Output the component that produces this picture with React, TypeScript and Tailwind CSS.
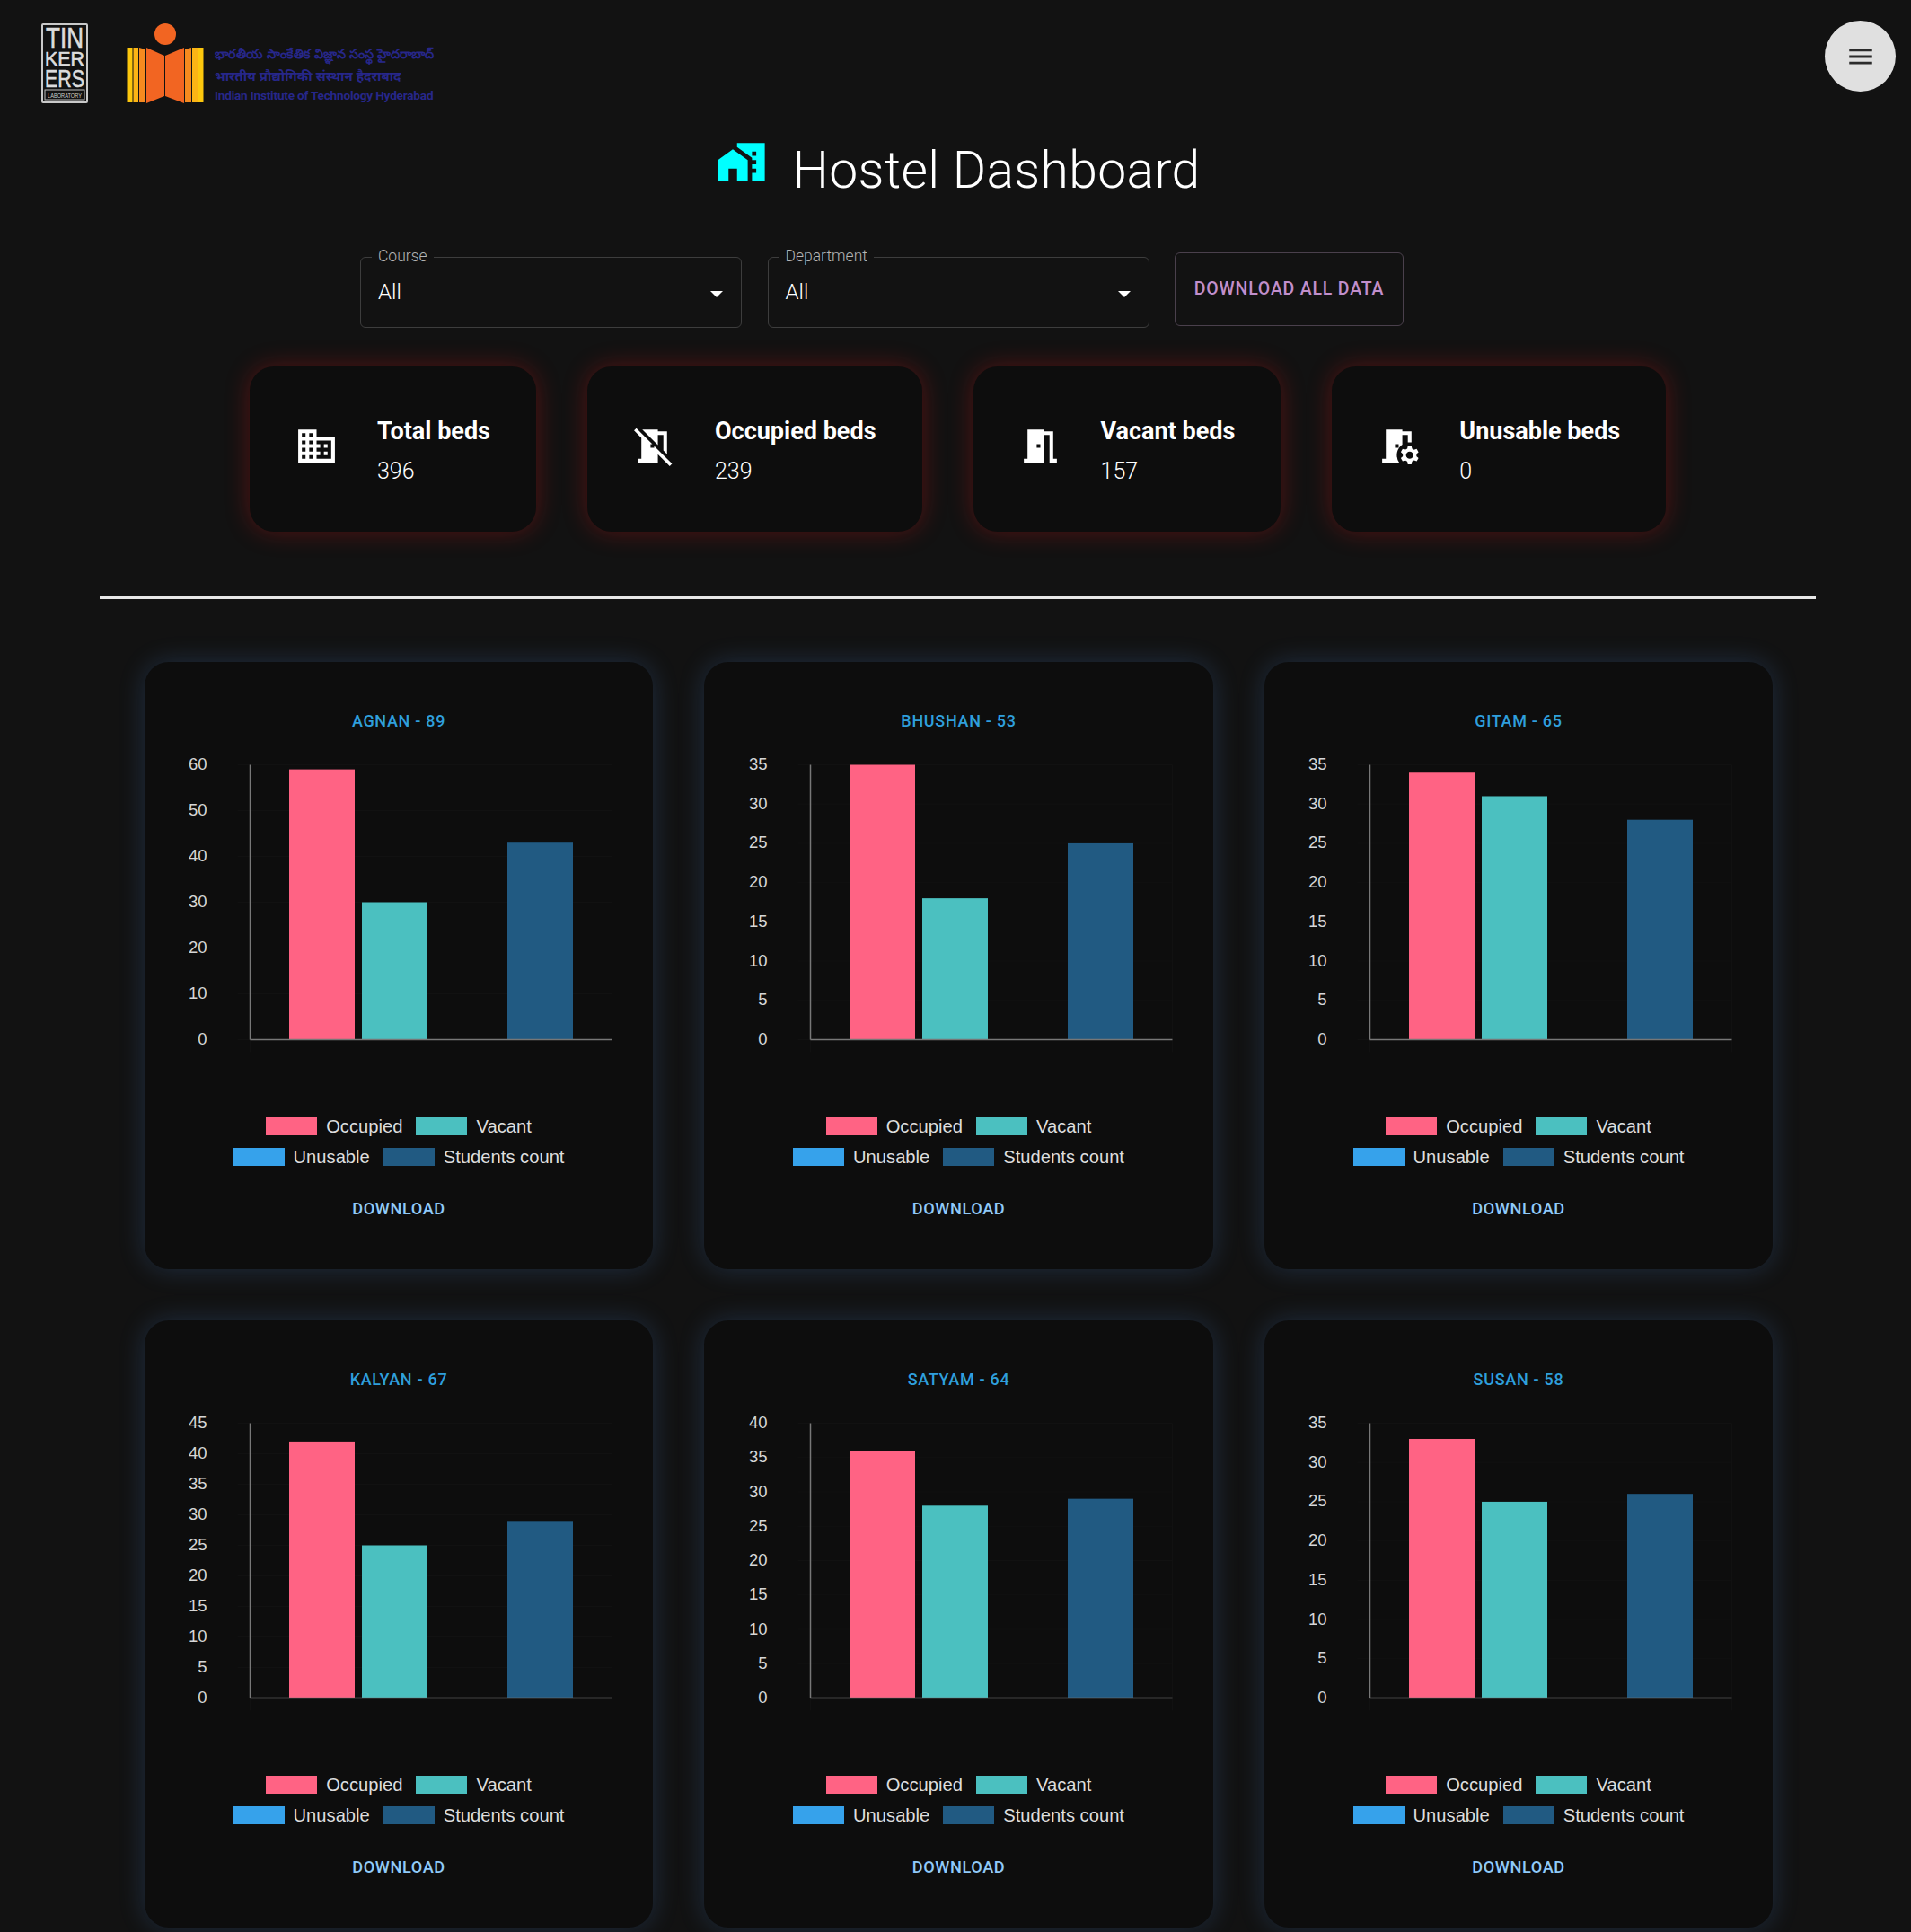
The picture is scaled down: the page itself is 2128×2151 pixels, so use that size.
import { MdDomain, MdMapsHomeWork, MdMeetingRoom, MdMenu, MdNoMeetingRoom, MdRoomPreferences } from "react-icons/md";

const stats = [
  { title: "Total beds", value: 396, icon: MdDomain },
  { title: "Occupied beds", value: 239, icon: MdNoMeetingRoom },
  { title: "Vacant beds", value: 157, icon: MdMeetingRoom },
  { title: "Unusable beds", value: 0, icon: MdRoomPreferences },
];

const hostels = [
  { name: "AGNAN - 89", data: [59, 30, 0, 43], max: 60, step: 10 },
  { name: "BHUSHAN - 53", data: [35, 18, 0, 25], max: 35, step: 5 },
  { name: "GITAM - 65", data: [34, 31, 0, 28], max: 35, step: 5 },
  { name: "KALYAN - 67", data: [42, 25, 0, 29], max: 45, step: 5 },
  { name: "SATYAM - 64", data: [36, 28, 0, 29], max: 40, step: 5 },
  { name: "SUSAN - 58", data: [33, 25, 0, 26], max: 35, step: 5 },
];

const barColors = ["#ff6384", "#4bc0c0", "#36a2eb", "#215a82"];

const TinkerersLogo = () => (
  <svg width="52" height="89" viewBox="0 0 52 89" className="shrink-0 overflow-visible">
    <rect x="1" y="1" width="50" height="87" fill="none" stroke="#c9c9c9" strokeWidth="2" rx="1" />
    <g fill="#dcdcdc" stroke="#dcdcdc" strokeWidth="0.6" className="[font-family:'Liberation_Sans',sans-serif]">
      <text x="5" y="27" fontSize="32" textLength="42" lengthAdjust="spacingAndGlyphs">TIN</text>
      <text x="4" y="47" fontSize="22" textLength="44" lengthAdjust="spacingAndGlyphs">KER</text>
      <text x="4" y="70.5" fontSize="28" textLength="44" lengthAdjust="spacingAndGlyphs">ERS</text>
    </g>
    <rect x="4" y="74" width="44" height="11" fill="none" stroke="#bdbdbd" strokeWidth="1" />
    <text x="7" y="82.5" fontSize="7" fill="#cfcfcf" textLength="38" lengthAdjust="spacingAndGlyphs" className="[font-family:'Liberation_Sans',sans-serif]">
      LABORATORY
    </text>
  </svg>
);

const IithMark = () => (
  <svg width="86" height="90" viewBox="0 0 86 90" className="shrink-0">
    <circle cx="43" cy="12" r="12" fill="#f26522" />
    <polygon points="0.5,27 6.5,27 6.5,88 0.5,88" fill="#fcc70d" />
    <polygon points="7.5,27 13,27 13,88 7.5,88" fill="#fbb415" />
    <polygon points="14,27 21,29 21,88 14,88" fill="#f58a1f" />
    <polygon points="22,27 42,36 42,81 22,89" fill="#f26522" />
    <polygon points="43,36 64,27 64,89 43,81" fill="#f26522" />
    <polygon points="65,29 72,27 72,88 65,88" fill="#f58a1f" />
    <polygon points="73,27 79,27 79,88 73,88" fill="#fbb415" />
    <polygon points="80,27 85.5,27 85.5,88 80,88" fill="#fcc70d" />
  </svg>
);

const Select = ({ label }: { label: string }) => (
  <div className="relative mt-[6px] flex h-[79px] w-[425px] items-start rounded-[6px] border border-[#3d3d3d] pl-[19px]">
    <span className="absolute -top-[14px] left-[12px] bg-[#121212] px-[7px] text-[17.5px] leading-[24px] font-light text-[#b4b4b4]">{label}</span>
    <span className="mt-[22px] text-[24px] leading-[32px] font-light text-white">All</span>
    <span className="absolute top-[37px] right-[20px] h-0 w-0 border-x-[7px] border-t-[7px] border-x-transparent border-t-white" />
  </div>
);

const StatCard = ({ title, value, icon: Icon }: (typeof stats)[number]) => (
  <div className="flex h-[184px] items-center rounded-[27px] bg-[#0d0d0d] pr-[51px] pl-[50px] shadow-[0_0_28px_rgba(255,20,20,0.28)]">
    <Icon size={49} className="mt-[-8px] shrink-0 text-white" />
    <div className="ml-[43px] flex flex-col pt-[4px]">
      <div className="text-[27px] leading-[45px] font-bold whitespace-nowrap text-white">{title}</div>
      <div className="text-[25px] leading-[44px] font-light text-white">{value}</div>
    </div>
  </div>
);

const Chart = ({ data, max, step }: { data: number[]; max: number; step: number }) => {
  const left = 117.5;
  const right = 520.5;
  const top = 11.5;
  const bottom = 317.5;
  const ticks: number[] = [];
  for (let t = 0; t <= max; t += step) ticks.push(t);
  const y = (v: number) => bottom - ((bottom - top) * v) / max;

  return (
    <svg width="566" height="366" viewBox="0 0 566 366" className="mt-[25px] block">
      {ticks.map((t) => (
        <line key={t} x1={left - 14} x2={right} y1={y(t)} y2={y(t)} stroke="#111111" strokeWidth="1" />
      ))}
      <line x1={right} x2={right} y1={top} y2={bottom + 14} stroke="#111111" />
      <line x1={left} x2={left} y1={bottom} y2={bottom + 14} stroke="#111111" />
      {ticks.map((t) => (
        <text key={t} x="69.5" y={y(t) + 5.5} textAnchor="end" fontSize="18.5" fill="#d6d6d6" className="[font-family:'Liberation_Sans',sans-serif]">
          {t}
        </text>
      ))}
      {data.map((v, i) => (
        <rect key={i} x={161 + i * 81} y={y(v)} width="73" height={bottom - y(v)} fill={barColors[i]} />
      ))}
      <line x1={left} x2={left} y1={top} y2={bottom} stroke="#777" strokeWidth="1.5" />
      <line x1={left} x2={right} y1={bottom} y2={bottom} stroke="#777" strokeWidth="1.5" />
    </svg>
  );
};

const LegendItem = ({ color, label }: { color: string; label: string }) => (
  <div className="flex items-center gap-[10px]">
    <span className={`h-[20px] w-[57px] ${color}`} />
    <span>{label}</span>
  </div>
);

const HostelCard = ({ name, data, max, step }: (typeof hostels)[number]) => (
  <div className="flex h-[676px] flex-col items-center rounded-[27px] bg-[#0d0d0d] pt-[54px] shadow-[0_0_30px_rgba(90,160,255,0.2)]">
    <div className="text-[18px] leading-[24px] font-medium tracking-[0.7px] text-[#2f9fdc]">{name}</div>
    <Chart data={data} max={max} step={step} />
    <div className="mt-[31px] flex flex-col items-center text-[20.2px] leading-[34px] text-[#dddddd] [font-family:'Liberation_Sans',sans-serif]">
      <div className="flex gap-[15px]">
        <LegendItem color="bg-[#ff6384]" label="Occupied" />
        <LegendItem color="bg-[#4bc0c0]" label="Vacant" />
      </div>
      <div className="flex gap-[15px]">
        <LegendItem color="bg-[#36a2eb]" label="Unusable" />
        <LegendItem color="bg-[#215a82]" label="Students count" />
      </div>
    </div>
    <div className="mt-[29px] text-[18.2px] leading-[24px] font-medium tracking-[0.6px] text-[#90caf9]">DOWNLOAD</div>
  </div>
);

const App = () => {
  return (
    <div className="relative h-[2151px] w-full overflow-hidden bg-[#121212] [font-family:Roboto,sans-serif]">
      {/* menu button */}
      <button className="absolute top-[23px] right-[17px] flex h-[79px] w-[79px] items-center justify-center rounded-full bg-[#e0e0e0]">
        <MdMenu size={34} className="text-[#2b2b2b]" />
      </button>

      {/* logos */}
      <div className="flex h-[150px] items-start pt-[26px] pl-[46px]">
        <TinkerersLogo />
        <div className="ml-[43px]">
          <IithMark />
        </div>
        <div className="mt-[22px] ml-[12px] flex w-[250px] flex-col text-[#27278a] [font-family:'Liberation_Sans','Noto_Sans',sans-serif]">
          <span className="text-[14.4px] leading-[25px] font-bold whitespace-nowrap">భారతీయ సాంకేతిక విజ్ఞాన సంస్థ హైదరాబాద్</span>
          <span className="text-[14.9px] leading-[25px] font-bold whitespace-nowrap">भारतीय प्रौद्योगिकी संस्थान हैदराबाद</span>
          <span className="text-[13.6px] leading-[17px] font-bold tracking-[-0.2px] whitespace-nowrap [font-family:Roboto,sans-serif]">Indian Institute of Technology Hyderabad</span>
        </div>
      </div>

      {/* heading */}
      <div className="flex h-[76px] items-start justify-center pl-[5px]">
        <MdMapsHomeWork size={57} className="mt-[2px] text-[#00ffff]" />
        <h1 className="ml-[29px] pt-[2px] text-[57px] leading-[76px] font-light tracking-[0.35px] text-white">Hostel Dashboard</h1>
      </div>

      {/* filters */}
      <div className="mt-[54px] ml-[401px] flex items-start gap-[28.5px]">
        <Select label="Course" />
        <Select label="Department" />
        <button className="mt-[1px] h-[82px] w-[255px] rounded-[6px] border-[1.5px] border-[#4a404c] text-[19.5px] font-medium tracking-[0.8px] text-[#c18fcc]">
          DOWNLOAD ALL DATA
        </button>
      </div>

      {/* stats */}
      <div className="mt-[43px] ml-[278px] flex gap-[57px]">
        {stats.map((s) => (
          <StatCard key={s.title} {...s} />
        ))}
      </div>

      <div className="mt-[72px] ml-[111px] h-[3px] w-[1911px] bg-[#e8e8e8]" />

      {/* hostel charts */}
      <div className="mt-[70px] ml-[161px] grid grid-cols-[566px_567px_566px] gap-[57px]">
        {hostels.map((h) => (
          <HostelCard key={h.name} {...h} />
        ))}
      </div>
    </div>
  );
};

export default App;
